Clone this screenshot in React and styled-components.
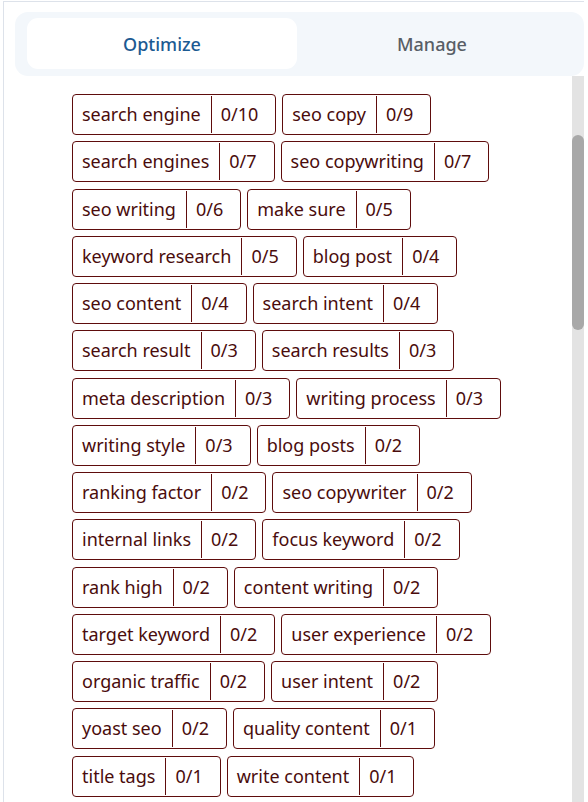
import React from "react";
import styled, { createGlobalStyle } from "styled-components";

const GlobalStyle = createGlobalStyle`
  html, body {
    margin: 0;
    padding: 0;
    height: 100%;
    background: #ffffff;
    overflow: hidden;
  }
  #root {
    height: 100%;
  }
  * {
    box-sizing: border-box;
  }
`;

const Panel = styled.div`
  margin: 1px 0 0 3px;
  width: 581px;
  height: calc(100vh - 1px);
  border-top: 1px solid #dde2ea;
  border-left: 1px solid #dde2ea;
  display: flex;
  flex-direction: column;
  font-family: "Noto Sans", "Open Sans", sans-serif;
  background: #ffffff;
`;

const TabBar = styled.div`
  margin: 10px 0 0 11px;
  height: 64px;
  background: #f3f7fb;
  border-radius: 13px;
  padding: 6px 17px 7px 12px;
  display: grid;
  grid-template-columns: 1fr 1fr;
  flex-shrink: 0;
`;

const Tab = styled.button`
  border: none;
  border-radius: 11px;
  background: ${(p) => (p.$active ? "#ffffff" : "transparent")};
  color: ${(p) => (p.$active ? "#1c5a92" : "#585e66")};
  font-family: inherit;
  font-size: 18px;
  font-weight: 500;
  cursor: pointer;
  padding: 0;
`;

const Body = styled.div`
  flex: 1;
  min-height: 0;
  display: flex;
`;

const Viewport = styled.div`
  flex: 1;
  min-width: 0;
  overflow: hidden;
`;

const ScrollTrack = styled.div`
  width: 12px;
  flex-shrink: 0;
  background: #e3e3e3;
  padding-top: 59px;
`;

const ScrollThumb = styled.div`
  height: 195px;
  border-radius: 6px;
  background: #a8a8a8;
`;

const Content = styled.div`
  padding: 18px 0 20px 68px;
`;

const ChipList = styled.div`
  width: 462px;
  display: flex;
  flex-wrap: wrap;
  column-gap: 6px;
  row-gap: 6.25px;
`;

const Chip = styled.div`
  display: flex;
  align-items: stretch;
  height: 41px;
  padding: 1px 0;
  border: 1px solid #5e0c0c;
  border-radius: 4px;
  color: #4a0c0c;
  font-size: 18px;
  line-height: 25px;
  background: #ffffff;
`;

const Label = styled.span`
  padding: 6px 10px 6px 9px;
  white-space: nowrap;
`;

const Count = styled.span`
  padding: 6px 17px 6px 9px;
  border-left: 1px solid #5e0c0c;
  white-space: nowrap;
`;

const keywords = [
  ["search engine", "0/10"],
  ["seo copy", "0/9"],
  ["search engines", "0/7"],
  ["seo copywriting", "0/7"],
  ["seo writing", "0/6"],
  ["make sure", "0/5"],
  ["keyword research", "0/5"],
  ["blog post", "0/4"],
  ["seo content", "0/4"],
  ["search intent", "0/4"],
  ["search result", "0/3"],
  ["search results", "0/3"],
  ["meta description", "0/3"],
  ["writing process", "0/3"],
  ["writing style", "0/3"],
  ["blog posts", "0/2"],
  ["ranking factor", "0/2"],
  ["seo copywriter", "0/2"],
  ["internal links", "0/2"],
  ["focus keyword", "0/2"],
  ["rank high", "0/2"],
  ["content writing", "0/2"],
  ["target keyword", "0/2"],
  ["user experience", "0/2"],
  ["organic traffic", "0/2"],
  ["user intent", "0/2"],
  ["yoast seo", "0/2"],
  ["quality content", "0/1"],
  ["title tags", "0/1"],
  ["write content", "0/1"],
];

export default function App() {
  const [tab, setTab] = React.useState("optimize");
  return (
    <>
      <GlobalStyle />
      <Panel>
        <TabBar>
          <Tab $active={tab === "optimize"} onClick={() => setTab("optimize")}>
            Optimize
          </Tab>
          <Tab $active={tab === "manage"} onClick={() => setTab("manage")}>
            Manage
          </Tab>
        </TabBar>
        <Body>
          <Viewport>
            <Content>
              <ChipList>
                {keywords.map(([k, c]) => (
                  <Chip key={k}>
                    <Label>{k}</Label>
                    <Count>{c}</Count>
                  </Chip>
                ))}
              </ChipList>
            </Content>
          </Viewport>
          <ScrollTrack>
            <ScrollThumb />
          </ScrollTrack>
        </Body>
      </Panel>
    </>
  );
}
